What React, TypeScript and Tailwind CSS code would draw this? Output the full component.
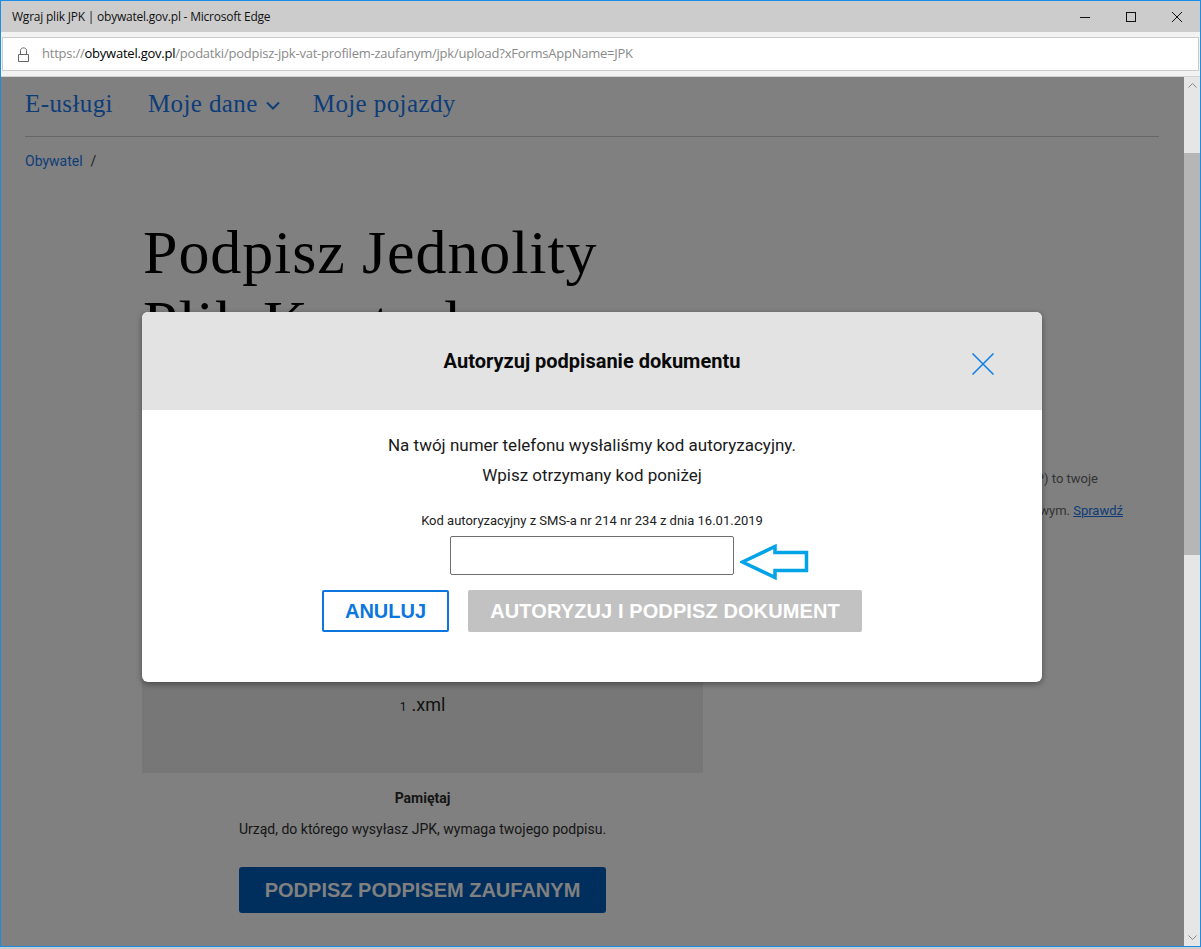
import React from 'react';

function WindowControls() {
  return (
    <div className="flex items-center gap-[36px] pr-[18px]">
      <svg width="10" height="10" viewBox="0 0 10 10" stroke="#111" fill="none">
        <path d="M0 5.5H10" />
      </svg>
      <svg width="10" height="10" viewBox="0 0 10 10" stroke="#111" fill="none">
        <rect x="0.5" y="0.5" width="9" height="9" />
      </svg>
      <svg width="10" height="10" viewBox="0 0 10 10" stroke="#111" fill="none">
        <path d="M0 0L10 10M10 0L0 10" />
      </svg>
    </div>
  );
}

function PageBehind() {
  return (
    <div className="h-full bg-[#808080] pl-6 pr-[25px] overflow-hidden">
      <nav className="h-[60px] pb-[6px] flex items-center gap-[35px] border-b border-[#666] text-[25px] text-[#0d3c78] font-['Liberation_Serif',serif] tracking-[0.4px]">
        <span>E-usługi</span>
        <span className="flex items-center gap-[8px]">
          Moje dane
          <svg className="mt-[3px] -mr-[2px]" width="14" height="9" viewBox="0 0 14 9" fill="none" stroke="#0d3c78" strokeWidth="2">
            <path d="M1 1.5L7 7.5L13 1.5" />
          </svg>
        </span>
        <span>Moje pojazdy</span>
      </nav>
      <div className="mt-4 flex gap-2 text-[14px] leading-[17px] font-['Roboto',sans-serif] text-[#0d3c78]">
        <span>Obywatel</span>
        <span className="text-[#222]">/</span>
      </div>
      <div className="ml-[117px] flex">
        <div className="w-[561px]">
          <h1 className="mt-[47px] w-[480px] pl-[1px] text-[62px] leading-[70px] font-['Liberation_Serif',serif] font-normal text-black tracking-[0.9px]">
            Podpisz Jednolity Plik Kontrolny
          </h1>
          <div className="mt-[216px] h-[200px] bg-[#777] flex flex-col items-center pt-[118px]">
            <div className="flex items-baseline gap-[5px] text-[#111] font-['Roboto',sans-serif]">
              <span className="text-[12px]">1</span>
              <span className="text-[18px]">.xml</span>
            </div>
          </div>
          <div className="flex flex-col items-center font-['Roboto',sans-serif] text-[14px] text-[#151515]">
            <p className="mt-[16px] leading-[18px] font-bold">Pamiętaj</p>
            <p className="mt-[13px] leading-[18px]">Urząd, do którego wysyłasz JPK, wymaga twojego podpisu.</p>
            <button className="mt-[29px] w-[367px] h-[46px] rounded-[3px] bg-[#002f5e] text-[#808080] text-[20px] font-bold font-['Liberation_Sans',sans-serif]">
              PODPISZ PODPISEM ZAUFANYM
            </button>
          </div>
        </div>
        <div className="flex-1 pr-[36px] pt-[293px] text-[13px] leading-[32px] font-['Roboto',sans-serif] text-[#333] text-right whitespace-nowrap">
          <p className="pr-[25px]">profil zaufany (ePUAP) to twoje</p>
          <p>
            kontem bankowym. <span className="text-[#0d3c78] underline">Sprawdź</span>
          </p>
        </div>
      </div>
    </div>
  );
}

function AuthorizeModal() {
  return (
    <div className="absolute left-[141px] top-[235px] w-[900px] h-[370px] rounded-[6px] bg-white overflow-hidden shadow-[0_2px_6px_rgba(0,0,0,0.4)] font-['Roboto',sans-serif]">
      <div className="relative h-[98px] bg-[#e3e3e3] flex items-center justify-center">
        <h2 className="text-[20px] font-bold text-[#0a0a0a]">Autoryzuj podpisanie dokumentu</h2>
        <svg className="absolute left-[830px] top-[41px]" width="22" height="22" viewBox="0 0 22 22" stroke="#0a7de6" strokeWidth="1.5" fill="none">
          <path d="M0.5 0.5L21.5 21.5M21.5 0.5L0.5 21.5" />
        </svg>
      </div>
      <div className="flex flex-col items-center pt-[20px]">
        <p className="text-[17px] leading-[30px] text-[#1a1a1a]">Na twój numer telefonu wysłaliśmy kod autoryzacyjny.</p>
        <p className="text-[17px] leading-[30px] text-[#1a1a1a]">Wpisz otrzymany kod poniżej</p>
        <label className="mt-[22px] text-[13px] leading-[18px] text-[#222]">Kod autoryzacyjny z SMS-a nr 214 nr 234 z dnia 16.01.2019</label>
        <div className="relative mt-[6px]">
          <input className="block w-[284px] h-[39px] rounded-[2px] border border-[#6e6e6e] bg-white" />
          <svg className="absolute left-[290px] top-[8px]" width="70" height="36" viewBox="0 0 70 36" stroke="#00a3e8" strokeWidth="3.5" fill="none">
            <path d="M2.5 18L35 2.5V8.5H66.5V26.5H35V33.5Z" />
          </svg>
        </div>
        <div className="mt-[15px] flex gap-[19px] font-['Liberation_Sans',sans-serif] font-bold text-[20px]">
          <button className="w-[127px] h-[42px] rounded-[2px] border-2 border-[#0b76e0] text-[#0b76e0]">ANULUJ</button>
          <button className="w-[394px] h-[42px] rounded-[2px] bg-[#c2c2c2] text-white tracking-[0.1px]">AUTORYZUJ I PODPISZ DOKUMENT</button>
        </div>
      </div>
    </div>
  );
}

export default function App() {
  return (
    <div className="w-[1201px] h-[949px] bg-[#cccccc] overflow-hidden">
      <div className="h-[947px] border border-[#1c8ce4] flex flex-col">
        <div className="h-[31px] bg-[#cccccc] flex items-center justify-between pl-[11px] font-['Open_Sans',sans-serif] text-[12px] text-[#111]">
          <span className="tracking-[-0.22px]">Wgraj plik JPK | obywatel.gov.pl - Microsoft Edge</span>
          <WindowControls />
        </div>
        <div className="h-[45px] bg-[#f2f2f2] border-b border-[#d2d2d2] px-[1px] pt-[5px]">
          <div className="h-[34px] bg-white border border-[#cccccc] flex items-center pl-[15px] gap-[13px] font-['Open_Sans',sans-serif] text-[13px] text-[#8a8a8a]">
            <svg width="11" height="15" viewBox="0 0 11 15" fill="none" stroke="#666">
              <path d="M0.5 7.5H10.5V14.5H0.5ZM2.5 7.5V3.5C2.5 0 8.5 0 8.5 3.5V7.5" />
            </svg>
            <span className="tracking-[-0.23px]">
              https://<span className="text-black">obywatel.gov.pl</span>/podatki/podpisz-jpk-vat-profilem-zaufanym/jpk/upload?xFormsAppName=JPK
            </span>
          </div>
        </div>
        <div className="relative flex-1 flex min-h-0">
          <div className="flex-1 min-w-0">
            <PageBehind />
          </div>
          <div className="w-[16px] bg-[#e6e6e6] flex flex-col items-center">
            <svg className="mt-[6px]" width="9" height="5" viewBox="0 0 9 5" fill="none" stroke="#888">
              <path d="M0.5 4.5L4.5 0.5L8.5 4.5" />
            </svg>
            <div className="mt-[65px] w-full h-[402px] bg-[#b6b6b6]" />
            <svg className="mt-auto mb-[6px]" width="9" height="5" viewBox="0 0 9 5" fill="none" stroke="#888">
              <path d="M0.5 0.5L4.5 4.5L8.5 0.5" />
            </svg>
          </div>
          <AuthorizeModal />
        </div>
      </div>
    </div>
  );
}
